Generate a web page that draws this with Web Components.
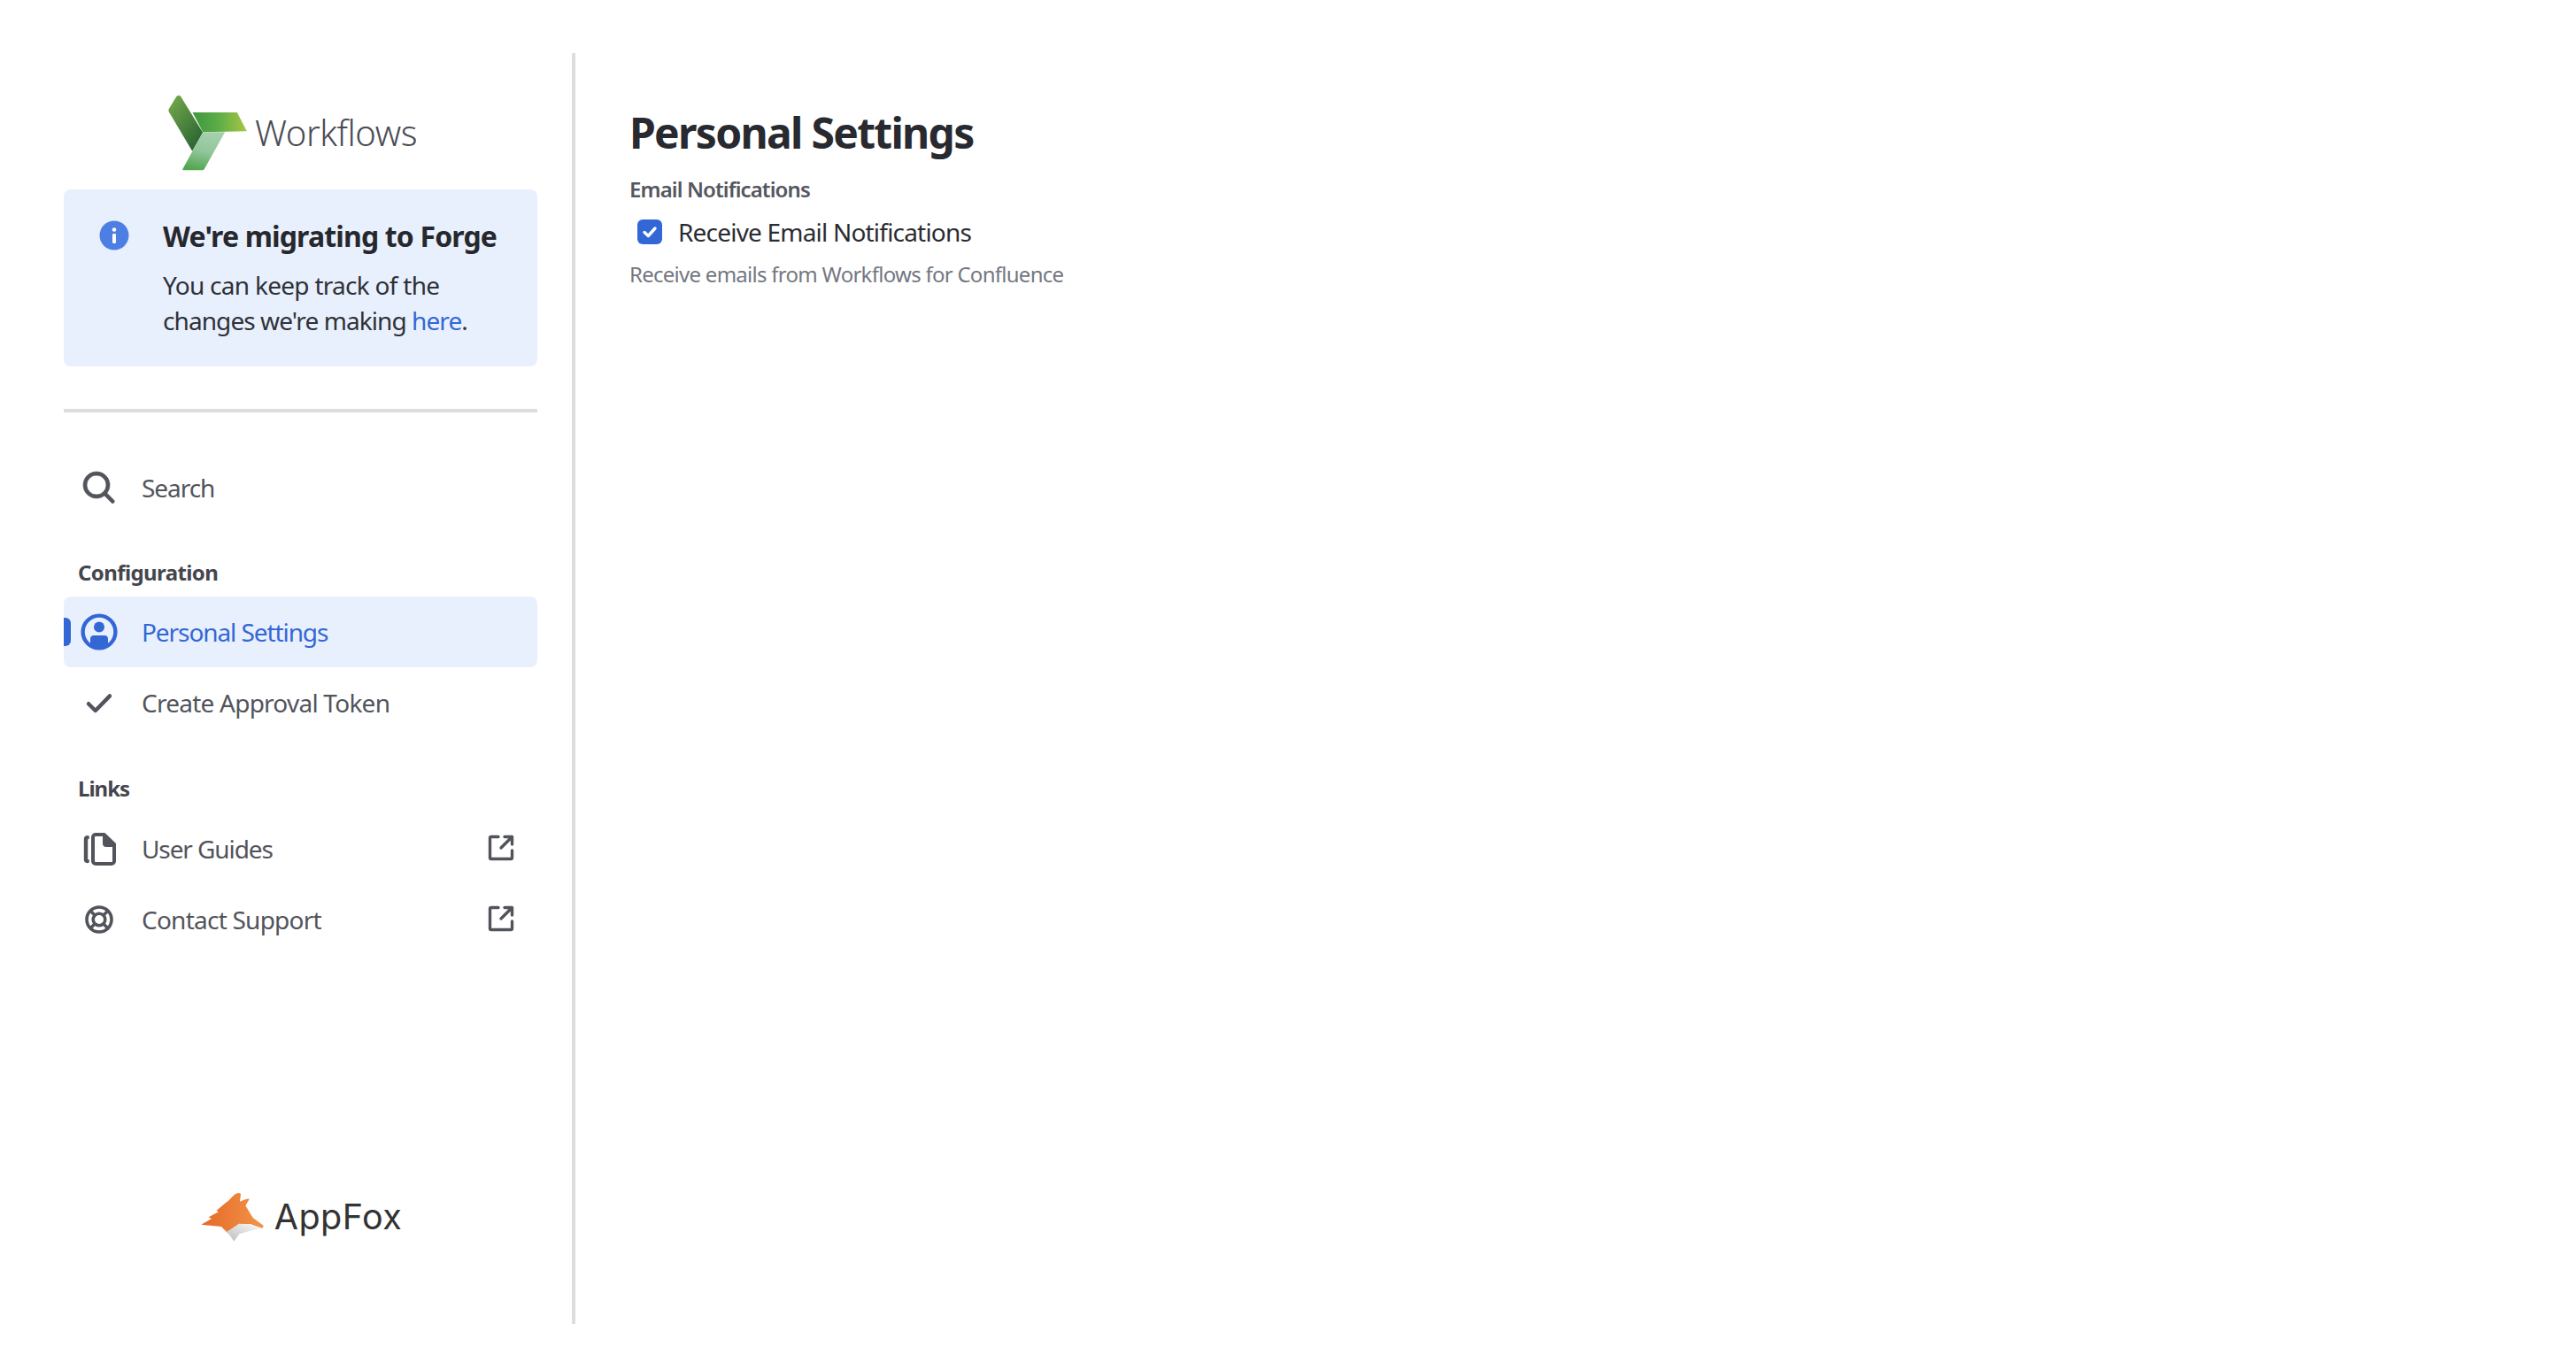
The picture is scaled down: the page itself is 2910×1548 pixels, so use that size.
<!doctype html>
<html lang="en"><head><meta charset="utf-8"><title>Personal Settings</title>
<style>html,body{margin:0;height:100%;background:#fff;font-family:"Noto Sans","Open Sans",sans-serif}</style></head>
<body>
<x-app>
  <x-sidebar slot="side">
    <x-brand></x-brand>
    <x-banner heading="We're migrating to Forge">You can keep track of the<br><span style="letter-spacing:-.92px">changes we're making <a href="#" style="color:#3367d6;text-decoration:none">here</a>.</span></x-banner>
    <x-rule></x-rule>
    <x-nav-item icon="search" style="letter-spacing:-1.05px">Search</x-nav-item>
    <x-nav-label>Configuration</x-nav-label>
    <x-nav-item icon="person" active style="letter-spacing:-1.08px">Personal Settings</x-nav-item>
    <x-nav-item icon="check">Create Approval Token</x-nav-item>
    <x-nav-label style="margin:41px 0 12px;letter-spacing:-1px">Links</x-nav-label>
    <x-nav-item icon="docs" external style="letter-spacing:-1.1px">User Guides</x-nav-item>
    <x-nav-item icon="buoy" external>Contact Support</x-nav-item>
    <x-appfox></x-appfox>
  </x-sidebar>
  <x-settings slot="main"></x-settings>
</x-app>
<script>
const ICONS={
search:'<path fill="currentColor" stroke="currentColor" stroke-width=".35" fill-rule="evenodd" d="M16.436 15.085l3.94 4.01a1 1 0 0 1-1.425 1.402l-3.938-4.006a7.5 7.5 0 1 1 1.423-1.406zM10.5 16a5.5 5.5 0 1 0 0-11 5.5 5.5 0 0 0 0 11z"/>',
person:'<circle cx="12" cy="12" r="9.2" fill="none" stroke="currentColor" stroke-width="2.2"/><circle cx="12" cy="9.300" r="3" fill="currentColor"/><path fill="currentColor" d="M7 16a2 2 0 0 1 2-2h6a2 2 0 0 1 2 2v3.400a9 9 0 0 1-10 0z"/>',
check:'<path d="M6 12.600l3.900 3.900L18 8.200" fill="none" stroke="currentColor" stroke-width="2.200" stroke-linecap="round" stroke-linejoin="round"/>',
docs:'<path fill="none" stroke="currentColor" stroke-width="2" d="M14.500 4H10a1.500 1.500 0 0 0-1.500 1.500V19a1.500 1.500 0 0 0 1.500 1.500h9a1.500 1.500 0 0 0 1.500-1.500V10"/><path fill="currentColor" d="M14 3h1.200l6.300 6v2H16a2 2 0 0 1-2-2z"/><path fill="none" stroke="currentColor" stroke-width="2.200" stroke-linecap="round" d="M5.400 5.600a1 1 0 0 0-.9 1V18a1 1 0 0 0 .9 1"/>',
buoy:'<g fill="none" stroke="currentColor" stroke-width="1.800"><circle cx="12" cy="12" r="7"/><circle cx="12" cy="12" r="3.400"/><path d="M7 7l2.600 2.600M17 7l-2.600 2.600M7 17l2.600-2.600M17 17l-2.600-2.600"/></g>'
};
const FS='"Noto Sans","Open Sans",sans-serif';
function def(name,css,html){
  customElements.define(name,class extends HTMLElement{
    connectedCallback(){
      if(this.shadowRoot)return;
      const r=this.attachShadow({mode:'open'});
      r.innerHTML='<style>'+css+'</style>'+(typeof html==='function'?html(this):html);
    }
  });
}
def('x-app',`:host{display:flex;box-sizing:border-box;height:100vh;padding:60px 0 52px}`,`<slot name="side"></slot><slot name="main"></slot>`);
def('x-sidebar',`:host{display:flex;flex-direction:column;box-sizing:border-box;flex:0 0 auto;width:650px;padding:0 39px 0 72px;border-right:4px solid #ddd;height:100%}`,`<slot></slot>`);
def('x-brand',`:host{display:flex;align-items:center;gap:8px;padding:43px 0 0 116px;margin-bottom:21px;height:90px}
span{font:300 40px/1 ${FS};letter-spacing:-.45px;color:#4a4c55;margin-top:4px}svg{display:block;flex:none}`,
`<svg width="92" height="90" viewBox="55 40 275 270" aria-hidden="true"><defs>
<linearGradient id="a" x1="0" y1="0" x2=".75" y2="1"><stop offset="0" stop-color="#77ad4c"/><stop offset="1" stop-color="#2a6333"/></linearGradient>
<linearGradient id="b" x1="0" y1="0" x2="1" y2="0"><stop offset="0" stop-color="#3f973f"/><stop offset=".5" stop-color="#5fae48"/><stop offset="1" stop-color="#a8c644"/></linearGradient>
<linearGradient id="c" x1=".6" y1="0" x2=".35" y2="1"><stop offset="0" stop-color="#a5d0ad"/><stop offset=".5" stop-color="#92c59a"/><stop offset="1" stop-color="#52a64e"/></linearGradient></defs>
<path fill="url(#b)" d="M143 112H294L327 176 178 179z"/>
<path fill="url(#a)" d="M88 59Q96 50 103 58L178 180 142 243 64 112Q59 105 63 100z"/>
<path fill="url(#c)" d="M178 179H253L183 304Q181 308 176 308H112Q107 308 110 303z"/></svg><span>Workflows</span>`);
def('x-banner',`:host{display:flex;box-sizing:border-box;height:200px;background:#e9f0fd;border-radius:8px;padding:31px 0 0 40px;color:#2f3138}
svg{flex:none;display:block;margin-top:4px}
.c{margin-left:38px}
h2{margin:0;font:700 32px/44px ${FS};letter-spacing:-.85px;color:#26282d}
p{margin:13px 0 0;font:400 28px/40px ${FS};letter-spacing:-.72px}`,
h=>`<svg width="34" height="34" viewBox="0 0 34 34" aria-hidden="true"><circle cx="17" cy="17" r="16.500" fill="#4d7ee4"/><circle cx="17" cy="10.500" r="2.300" fill="#fff"/><rect x="15" y="15" width="4" height="11" rx="1.200" fill="#fff"/></svg><div class="c"><h2>${h.getAttribute('heading')}</h2><p><slot></slot></p></div>`);
def('x-rule',`:host{display:block;height:4px;background:#ddd;margin:48px 0 45px}`,``);
def('x-nav-label',`:host{display:block;font:700 24px/32px ${FS};letter-spacing:-.6px;color:#44464d;padding:0 16px;margin:40px 0 11px}`,`<slot></slot>`);
def('x-nav-item',`:host{position:relative;display:flex;align-items:center;box-sizing:border-box;height:80px;padding:0 25px 0 16px;border-radius:8px;color:#52545c;font:400 28px/40px ${FS};letter-spacing:-.76px}
:host([active]){background:#e9f0fd;color:#3367d6}
:host([active])::before{content:"";position:absolute;left:0;top:24px;width:8px;height:32px;background:#3367d6;border-radius:0 6px 6px 0}
svg{display:block;flex:none}.t{flex:1;margin-left:24px}.x{margin-top:-2px}`,
h=>`<svg width="48" height="48" viewBox="0 0 24 24" aria-hidden="true">${ICONS[h.getAttribute('icon')]}</svg><span class="t"><slot></slot></span>`+(h.hasAttribute('external')?`<svg class="x" width="32" height="32" viewBox="0 0 32 32" fill="none" stroke="currentColor" stroke-width="3.4" stroke-linecap="round" stroke-linejoin="round" aria-hidden="true"><path d="M13 3.500H5A1.500 1.500 0 0 0 3.500 5v22A1.500 1.500 0 0 0 5 28.500h22a1.500 1.500 0 0 0 1.500-1.500v-8"/><path d="M28.500 3.500L16 16M20 3.500h8.500V12"/></svg>`:''));
def('x-appfox',`:host{display:flex;align-items:center;justify-content:center;gap:9px;margin-top:auto;padding-bottom:90px}
span{font:400 39.500px/1 Inter,sans-serif;letter-spacing:.5px;color:#333}svg{display:block;flex:none}`,
`<svg width="76" height="60" viewBox="30 35 228 180" aria-hidden="true"><defs>
<linearGradient id="f" x1="0" y1="0" x2="1" y2="0"><stop offset="0" stop-color="#e46a25"/><stop offset="1" stop-color="#f3934a"/></linearGradient>
<linearGradient id="g" x1="0" y1="1" x2="1" y2="0"><stop offset="0" stop-color="#bdbdbd"/><stop offset="1" stop-color="#fafafa"/></linearGradient></defs>
<path fill="url(#f)" d="M37 148L72 128 62 123 96 105 88 101 128 68 150 46Q164 37 171 44L168 70 186 63Q198 58 200 62L187 84 212 125 246 150Q251 156 243 160L205 147 165 145 125 175 105 155z"/>
<path fill="url(#g)" d="M123 172L165 146 205 147 236 161 190 173 166 180 148 205 138 190z"/></svg><span>AppFox</span>`);
def('x-checkbox',`:host{display:flex;align-items:center;padding-left:9px;font:400 28px/40px ${FS};letter-spacing:-.8px;color:#2a2c32}
svg{display:block;flex:none;margin-right:18px}`,
`<svg width="28" height="28" viewBox="0 0 28 28" role="img" aria-label="checked"><rect width="28" height="28" rx="6" fill="#3367d6"/><path d="M8 14.500l4.300 4L20 10" fill="none" stroke="#fff" stroke-width="3.400" stroke-linecap="round" stroke-linejoin="round"/></svg><span><slot></slot></span>`);
def('x-settings',`:host{display:block;padding:0 0 0 61px;flex:1}
h1{margin:0;font:700 48px/68px ${FS};letter-spacing:-1.7px;color:#282a30;padding-top:56px}
.l{font:600 24px/32px ${FS};letter-spacing:-.9px;color:#55575f;margin-top:14px}
.h{font:400 24px/32px ${FS};letter-spacing:-.73px;color:#747781;margin-top:12px}
x-checkbox{margin-top:12px}`,
`<h1>Personal Settings</h1><div class="l">Email Notifications</div><x-checkbox>Receive Email Notifications</x-checkbox><div class="h">Receive emails from Workflows for Confluence</div>`);
</script>
</body></html>
